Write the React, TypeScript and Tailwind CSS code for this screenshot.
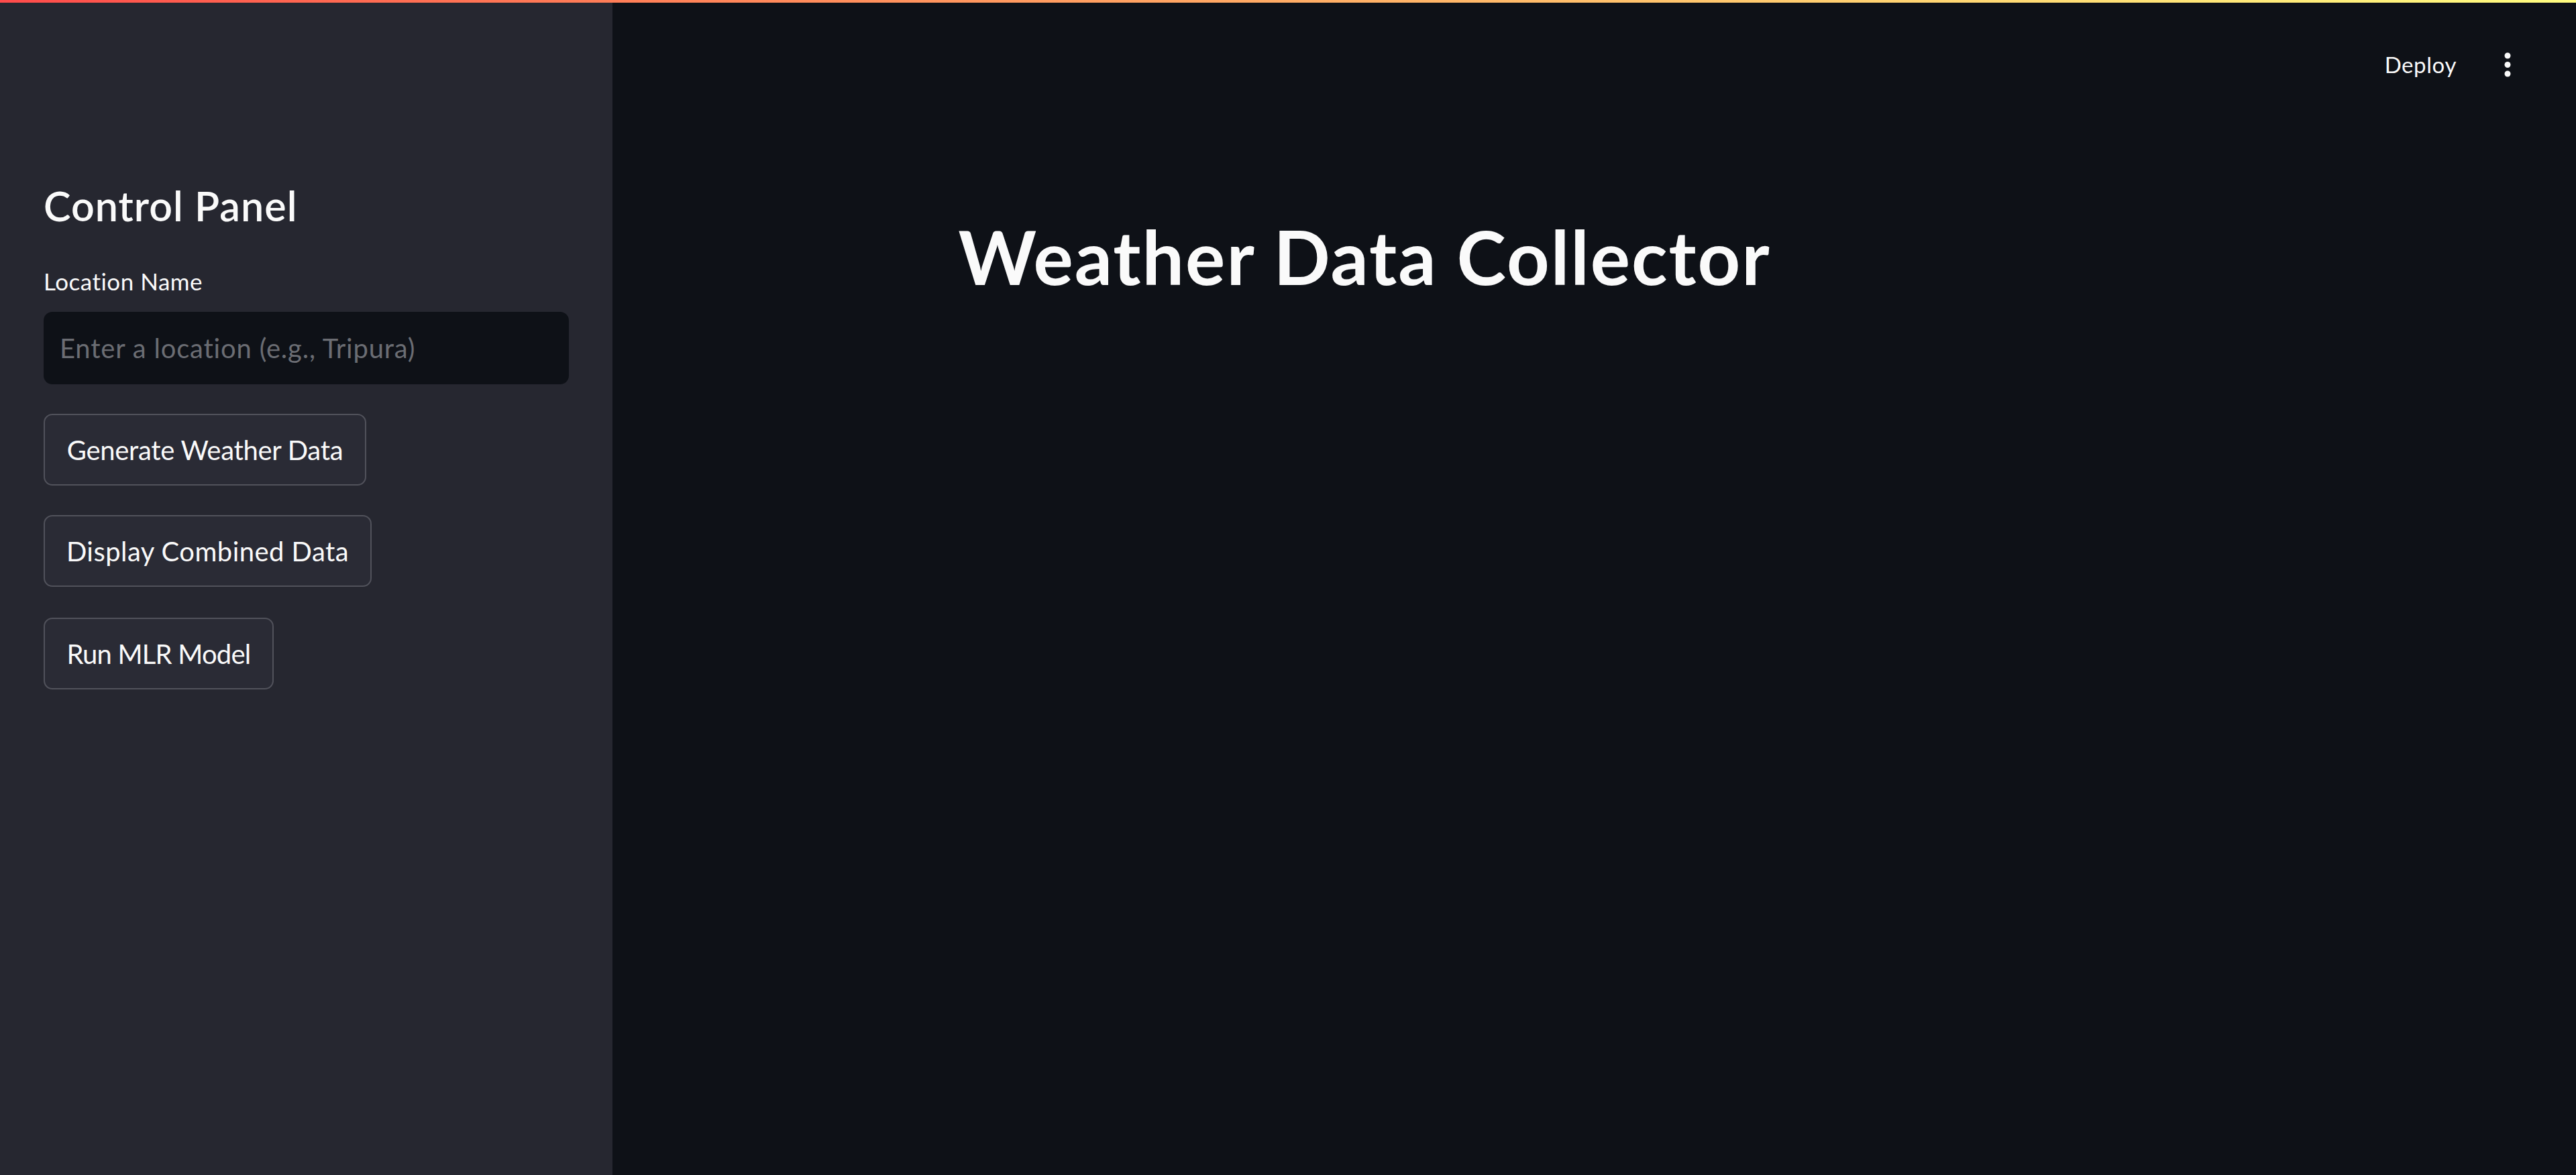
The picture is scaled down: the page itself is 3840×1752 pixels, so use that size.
import React from "react";

const font = { fontFamily: "Lato, 'Noto Sans', sans-serif" };

function Kebab() {
  return (
    <svg width="10" height="37" viewBox="0 0 10 37" className="block">
      <circle cx="5" cy="5" r="4.5" fill="#fafafa" />
      <circle cx="5" cy="18.5" r="4.5" fill="#fafafa" />
      <circle cx="5" cy="32" r="4.5" fill="#fafafa" />
    </svg>
  );
}

function SideButton({ label, cls }: { label: string; cls: string }) {
  return (
    <button
      className={
        "self-start h-[107px] rounded-[13px] border-[2px] border-[#51525b] bg-[#2a2b35] text-[#fafafa] text-[40px] leading-none font-normal flex items-center justify-center " +
        cls
      }
    >
      {label}
    </button>
  );
}

export default function App() {
  return (
    <div className="w-full h-[1752px] flex flex-col bg-[#0e1117] overflow-hidden" style={font}>
      <div className="h-[4px] w-full shrink-0 bg-gradient-to-r from-[#ff4b4b] to-[#fffd80]" />
      <div className="flex flex-1 min-h-0">
        <aside className="w-[913px] shrink-0 bg-[#262730] flex flex-col px-[65px] pt-[264px]">
          <h2 className="text-[61px] leading-[77px] font-semibold text-[#fafafa] tracking-[1px]">Control Panel</h2>
          <label className="mt-[47px] text-[35px] leading-[55px] text-[#fafafa] tracking-[0.5px]">Location Name</label>
          <input
            className="mt-[18px] h-[108px] w-full rounded-[13px] bg-[#0e1117] pl-[24px] text-[40px] tracking-[0.8px] text-[#fafafa] outline-none placeholder:text-[#6b6d73]"
            placeholder="Enter a location (e.g., Tripura)"
          />
          <div className="mt-[44px] flex flex-col">
            <SideButton label="Generate Weather Data" cls="w-[481px] tracking-[-0.3px]" />
            <div className="mt-[44px]">
              <SideButton label="Display Combined Data" cls="w-[489px] tracking-[0.45px]" />
            </div>
            <div className="mt-[46px]">
              <SideButton label="Run MLR Model" cls="w-[343px] tracking-[-0.8px]" />
            </div>
          </div>
        </aside>
        <main className="flex-1 flex flex-col">
          <header className="h-[184px] shrink-0 flex items-center justify-end pr-[97px] gap-[71px]">
            <span className="text-[33px] leading-[40px] text-[#fafafa] tracking-[0.6px]">Deploy</span>
            <Kebab />
          </header>
          <div className="w-[1896px] mx-auto pt-[129px]">
            <h1 className="text-[111px] leading-[131px] font-bold text-[#fafafa] tracking-[2px]">Weather Data Collector</h1>
          </div>
        </main>
      </div>
    </div>
  );
}
